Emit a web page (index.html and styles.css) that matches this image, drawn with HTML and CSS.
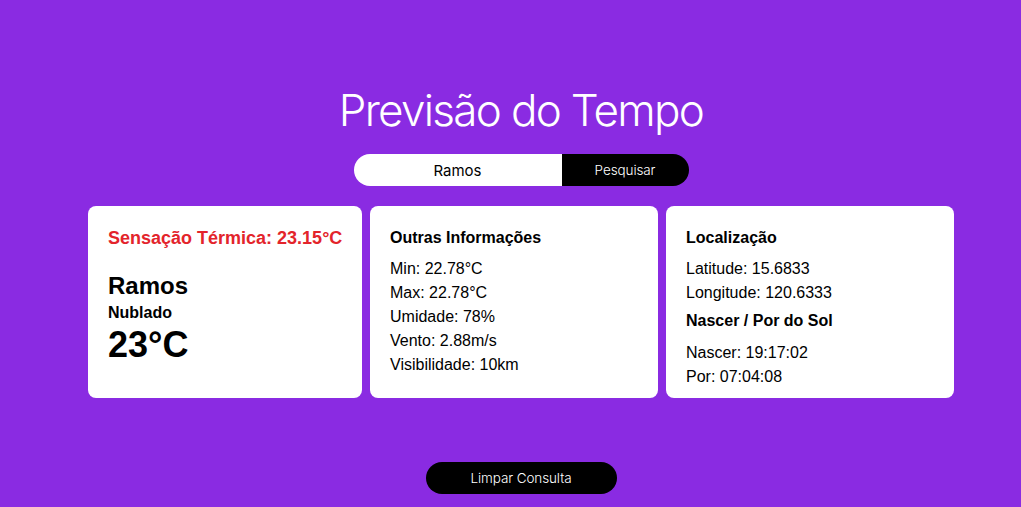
FILE: index.html
```html
<!DOCTYPE html>
<html lang="pt-BR">
<head>
<meta charset="utf-8">
<title>Previsão do Tempo</title>
<link rel="stylesheet" href="styles.css">
</head>
<body>
<main class="app">
  <h1 class="title">Previsão do Tempo</h1>
  <form class="search">
    <input class="search-input" type="text" value="Ramos">
    <button class="search-btn" type="button">Pesquisar</button>
  </form>
  <section class="cards">
    <div class="card card-main">
      <p class="feels">Sensação Térmica: 23.15°C</p>
      <h2 class="city">Ramos</h2>
      <p class="desc">Nublado</p>
      <p class="temp">23°C</p>
    </div>
    <div class="card">
      <h3 class="card-title">Outras Informações</h3>
      <ul class="list">
        <li>Min: 22.78°C</li>
        <li>Max: 22.78°C</li>
        <li>Umidade: 78%</li>
        <li>Vento: 2.88m/s</li>
        <li>Visibilidade: 10km</li>
      </ul>
    </div>
    <div class="card">
      <h3 class="card-title">Localização</h3>
      <ul class="list">
        <li>Latitude: 15.6833</li>
        <li>Longitude: 120.6333</li>
      </ul>
      <h3 class="card-title sub">Nascer / Por do Sol</h3>
      <ul class="list list-sun">
        <li>Nascer: 19:17:02</li>
        <li>Por: 07:04:08</li>
      </ul>
    </div>
  </section>
  <button class="clear-btn" type="button">Limpar Consulta</button>
</main>
</body>
</html>
```

FILE: styles.css
```css
* { box-sizing: border-box; }
html, body {
  margin: 0;
  padding: 0;
  background: #8a2be2;
  height: 100%;
}
body {
  font-family: "Liberation Sans", Arial, sans-serif;
  overflow: hidden;
}
.app {
  display: flex;
  flex-direction: column;
  align-items: center;
  padding: 82px 0 0 21px;
}
.title {
  margin: 0;
  font-family: Inter, "Noto Sans", sans-serif;
  font-weight: 300;
  font-size: 44px;
  line-height: 56px;
  color: #fff;
  letter-spacing: -1.7px;
}
.search {
  display: flex;
  margin: 16px 0 0;
  height: 32px;
  width: 335px;
  border-radius: 16px;
  overflow: hidden;
}
.search-input {
  width: 208px;
  height: 32px;
  border: none;
  outline: none;
  margin: 0;
  padding: 0;
  background: #fff;
  text-align: center;
  font-family: Inter, "Noto Sans", sans-serif;
  font-size: 15px;
  color: #000;
}
.search-btn {
  flex: 1;
  height: 32px;
  border: none;
  margin: 0;
  padding: 0;
  background: #000;
  color: #fff;
  font-family: Inter, "Noto Sans", sans-serif;
  font-weight: 300;
  font-size: 13.5px;
  letter-spacing: -0.1px;
}
.cards {
  display: grid;
  grid-template-columns: 274px 288px 288px;
  grid-template-rows: 192px;
  gap: 8px;
  margin-top: 20px;
}
.card {
  background: #fff;
  border-radius: 8px;
  padding: 20px 20px 0;
  color: #000;
}
.feels {
  margin: 0;
  color: #e3242b;
  font-weight: 700;
  font-size: 18px;
  line-height: 24px;
  white-space: nowrap;
}
.city {
  margin: 22px 0 0;
  font-size: 24px;
  font-weight: 700;
  line-height: 28px;
}
.desc {
  margin: 3px 0 0;
  font-size: 16px;
  font-weight: 700;
  line-height: 20px;
}
.temp {
  margin: 2px 0 0;
  font-size: 36px;
  font-weight: 700;
  line-height: 40px;
}
.card-title {
  margin: 0;
  font-size: 16px;
  font-weight: 700;
  line-height: 24px;
}
.card-title.sub {
  margin-top: 4px;
}
.list {
  list-style: none;
  margin: 7px 0 0;
  padding: 0;
  font-size: 16px;
  line-height: 24px;
}
.list-sun {
  margin-top: 8px;
}
.clear-btn {
  margin-top: 64px;
  width: 191px;
  height: 32px;
  border: none;
  border-radius: 16px;
  background: #000;
  color: #fff;
  font-family: Inter, "Noto Sans", sans-serif;
  font-weight: 300;
  font-size: 13.5px;
  letter-spacing: -0.1px;
  padding: 0;
}
```
